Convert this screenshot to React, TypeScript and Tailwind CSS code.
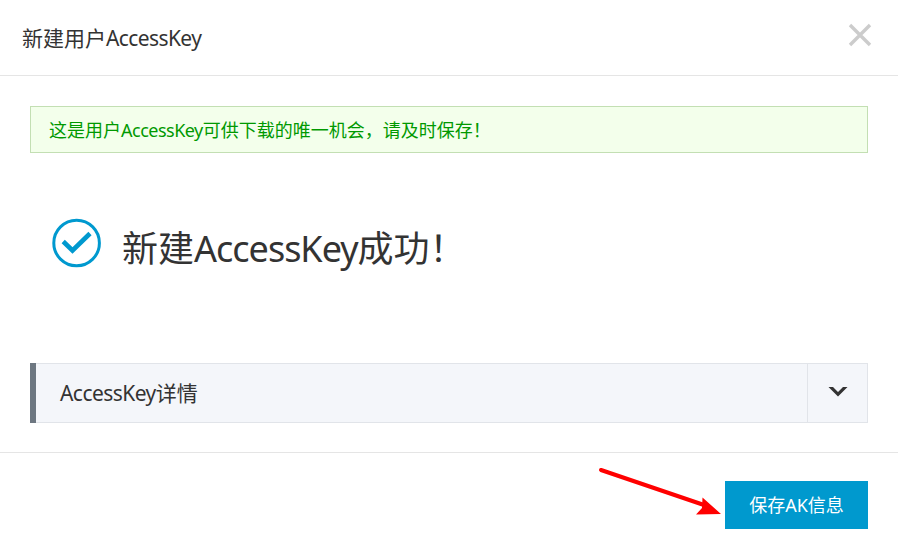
export default function App() {
  return (
    <div className="flex h-[554px] w-[898px] flex-col overflow-hidden bg-white text-[#333] [font-family:'Noto_Sans_CJK_SC',sans-serif]">
      <header className="flex h-[76px] shrink-0 items-center justify-between border-b border-[#e5e5e5] pl-[22px] pr-[26px]">
        <h1 className="whitespace-nowrap text-[21px] leading-[30px]">
          新建用户<span className="tracking-[-0.6px] [font-family:'Noto_Sans',sans-serif]">AccessKey</span>
        </h1>
        <svg className="mb-[6px] h-[24px] w-[24px]" viewBox="0 0 24 24" fill="none" stroke="#ccc" strokeWidth="3.4">
          <path d="M2 2L22 22M22 2L2 22" />
        </svg>
      </header>
      <main className="flex h-[376px] shrink-0 flex-col px-[30px] pt-[30px]">
        <div className="flex h-[47px] w-[838px] items-center border border-[#c3dfb3] bg-[#f3ffeb] pl-[18px] text-[#090]">
          <p className="whitespace-nowrap text-[18px] leading-[27px]">
            这是用户<span className="tracking-[-0.5px] [font-family:'Noto_Sans',sans-serif]">AccessKey</span>可供下载的唯一机会，请及时保存！
          </p>
        </div>
        <div className="mt-[65px] flex h-[52px] items-start pl-[22px]">
          <svg className="h-[50px] w-[50px]" viewBox="0 0 50 50" fill="none" stroke="#0099cf">
            <circle cx="24.6" cy="25" r="22.8" strokeWidth="3" />
            <path d="M11.2 23.5L20.5 32.5L38 15.5" strokeWidth="4.6" />
          </svg>
          <p className="ml-[20px] mt-[1px] whitespace-nowrap text-[36px] leading-[54px]">
            新建<span className="tracking-[-1px] [font-family:'Noto_Sans',sans-serif]">AccessKey</span>成功！
          </p>
        </div>
        <div className="mt-[93px] flex h-[60px] w-[838px] bg-[#f4f6fa]">
          <div className="w-[6px] bg-[#6d7781]" />
          <div className="flex flex-1 items-center border-y border-[#e1e4e9] pl-[24px]">
            <h2 className="mb-[2px] whitespace-nowrap text-[21px] leading-[30px]">
              <span className="tracking-[-0.55px] [font-family:'Noto_Sans',sans-serif]">AccessKey</span>详情
            </h2>
          </div>
          <div className="flex w-[61px] items-center justify-center border border-[#e1e4e9]">
            <svg className="mb-[2px] h-[10px] w-[20px]" viewBox="0 0 20 10" fill="#333">
              <path d="M0.5 0H5L10 5L15 0H19.5L10 9.5Z" />
            </svg>
          </div>
        </div>
      </main>
      <footer className="relative flex h-[102px] shrink-0 items-start justify-end border-t border-[#e5e5e5] pr-[30px] pt-[28px]">
        <button className="h-[48px] w-[143px] whitespace-nowrap bg-[#0099ce] text-[18px] text-white">
          保存<span className="[font-family:'Noto_Sans',sans-serif]">AK</span>信息
        </button>
        <svg className="absolute left-[596px] top-[10px] h-[60px] w-[130px]" viewBox="0 0 130 60">
          <path d="M5 7L108 42" stroke="#f00" strokeWidth="4" strokeLinecap="round" />
          <path d="M125 51L100 51.5L106 45L106.5 34.5Z" fill="#f00" />
        </svg>
      </footer>
    </div>
  );
}
